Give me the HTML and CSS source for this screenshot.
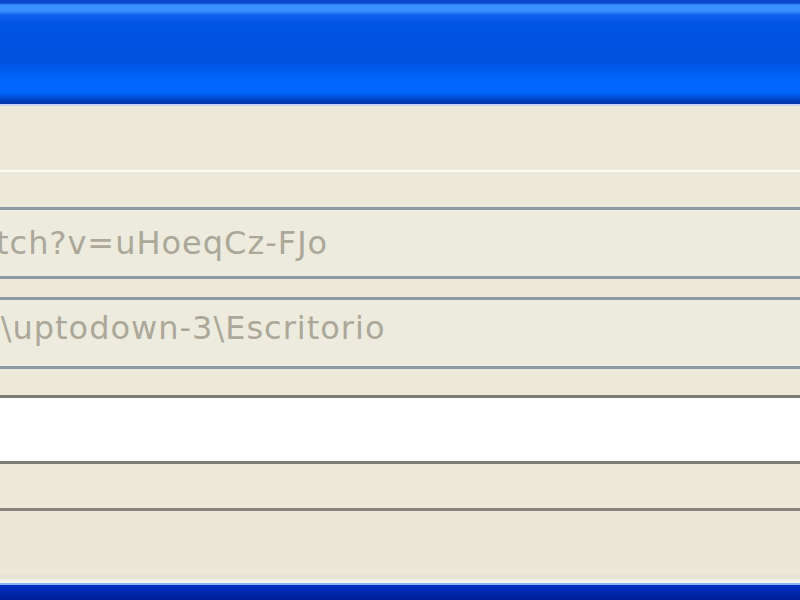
FILE: index.html
```html
<!DOCTYPE html>
<html>
<head>
<meta charset="utf-8">
<link rel="stylesheet" href="styles.css">
</head>
<body>
<div class="window">
  <div class="titlebar"></div>
  <div class="body">
    <div class="gap-top"></div>
    <div class="sep"></div>
    <div class="row row-a">
      <div class="field disabled"><span class="text t1">tch?v=uHoeqCz-FJo</span></div>
    </div>
    <div class="row row-b">
      <div class="field disabled"><span class="text t2">s\uptodown-3\Escritorio</span></div>
    </div>
    <div class="row row-c">
      <div class="field white"></div>
    </div>
    <div class="row row-d">
      <div class="field open"></div>
    </div>
  </div>
  <div class="bottombar"></div>
</div>
</body>
</html>
```
FILE: styles.css
```css
html, body {
  margin: 0;
  padding: 0;
  width: 800px;
  height: 600px;
  overflow: hidden;
  background: #ece9d8;
}
.window {
  display: flex;
  flex-direction: column;
  height: 600px;
}
.titlebar {
  height: 104px;
  background: linear-gradient(to bottom,
    #0a48d0 0px, #0a48d0 3px,
    #3a92ff 5px, #3a92ff 11px,
    #1060ee 15px,
    #0055e2 24px, #0052df 60px,
    #005ef0 72px, #0068ff 84px, #0064fa 93px,
    #004dd4 98px, #0038b0 102px, #0038b0 104px);
  border-bottom: 2px solid #c9d2f2;
}
.body {
  flex: 1;
  display: flex;
  flex-direction: column;
  background: #ece9d8;
}
.gap-top {
  height: 64px;
}
.sep {
  height: 2px;
  background: #fcfbf4;
}
.row {
  display: flex;
}
.row-a { margin-top: 35px; }
.row-b { margin-top: 18px; }
.row-c { margin-top: 26px; }
.row-d { margin-top: 44px; flex: 1; }
.field {
  flex: 1;
  display: flex;
  align-items: center;
  overflow: hidden;
  white-space: nowrap;
}
.field.disabled {
  height: 66px;
  background: #edebde;
  border-top: 3px solid #8e9ba6;
  border-bottom: 3px solid #8e9ba6;
}
.field.white {
  height: 63px;
  background: #ffffff;
  border-top: 3px solid #7c7c76;
  border-bottom: 3px solid #7c7c76;
}
.field.open {
  border-top: 3px solid #85837a;
  background: linear-gradient(to bottom, #ebe8d9 0, #ebe8d9 85%, #e3e0d0 92%, #f4f3ea 97%);
}
.text {
  font-family: "DejaVu Sans", sans-serif;
  font-size: 32px;
  color: #aca899;
  letter-spacing: 1px;
}
.t1 { margin-left: -4px; }
.t2 { margin-left: -17px; margin-top: -10px; }
.bottombar {
  height: 15px;
  background: linear-gradient(to bottom, #0030c4 0, #0028b0 6px, #001f9a 15px);
  border-top: 2px solid #8ab2f5;
}
```
